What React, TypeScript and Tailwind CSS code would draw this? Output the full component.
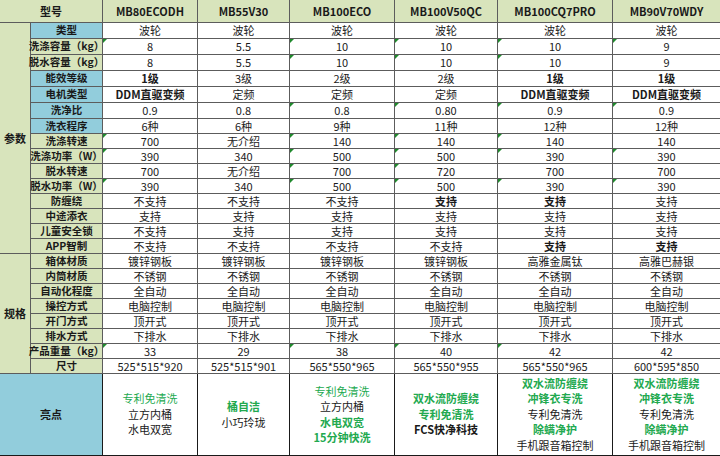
import React from 'react';

const models = ['MB80ECODH', 'MB55V30', 'MB100ECO', 'MB100V50QC', 'MB100CQ7PRO', 'MB90V70WDY'];

type Val = string | { t: string; b?: boolean };
type Row = { label: string; blue?: boolean; vals: Val[]; tri?: number[] };

const B = (t: string) => ({ t, b: true });

const params: Row[] = [
  { label: '类型', blue: true, vals: ['波轮', '波轮', '波轮', '波轮', '波轮', '波轮'] },
  { label: '洗涤容量（kg）', vals: ['8', '5.5', '10', '10', '10', '9'], tri: [0, 2, 3, 4, 5] },
  { label: '脱水容量（kg）', vals: ['8', '5.5', '10', '10', '10', '9'], tri: [2, 3, 4] },
  { label: '能效等级', blue: true, vals: [B('1级'), '3级', '2级', '2级', B('1级'), B('1级')] },
  { label: '电机类型', blue: true, vals: [B('DDM直驱变频'), '定频', '定频', '定频', B('DDM直驱变频'), B('DDM直驱变频')] },
  { label: '洗净比', blue: true, vals: ['0.9', '0.8', '0.8', '0.80', '0.9', '0.9'], tri: [2, 3, 4, 5] },
  { label: '洗衣程序', blue: true, vals: ['6种', '6种', '9种', '11种', '12种', '12种'] },
  { label: '洗涤转速', vals: ['700', '无介绍', '140', '140', '140', '140'], tri: [0, 2, 3, 4] },
  { label: '洗涤功率（W）', vals: ['390', '340', '500', '500', '390', '390'], tri: [0, 2, 3, 4, 5] },
  { label: '脱水转速', vals: ['700', '无介绍', '700', '720', '700', '700'], tri: [2, 3] },
  { label: '脱水功率（W）', vals: ['390', '340', '500', '500', '390', '390'], tri: [0, 2, 3, 4, 5] },
  { label: '防缠绕', vals: ['不支持', '不支持', '不支持', B('支持'), B('支持'), '支持'] },
  { label: '中途添衣', vals: ['支持', '支持', '支持', '支持', '支持', '支持'] },
  { label: '儿童安全锁', vals: ['不支持', '支持', '支持', '支持', '支持', '支持'] },
  { label: 'APP智制', vals: ['不支持', '不支持', '不支持', '不支持', B('支持'), B('支持')] },
];

const specs: Row[] = [
  { label: '箱体材质', vals: ['镀锌钢板', '镀锌钢板', '镀锌钢板', '镀锌钢板', '高雅金属钛', '高雅巴赫银'] },
  { label: '内筒材质', vals: ['不锈钢', '不锈钢', '不锈钢', '不锈钢', '不锈钢', '不锈钢'] },
  { label: '自动化程度', vals: ['全自动', '全自动', '全自动', '全自动', '全自动', '全自动'] },
  { label: '操控方式', vals: ['电脑控制', '电脑控制', '电脑控制', '电脑控制', '电脑控制', '电脑控制'] },
  { label: '开门方式', vals: ['顶开式', '顶开式', '顶开式', '顶开式', '顶开式', '顶开式'] },
  { label: '排水方式', vals: ['下排水', '下排水', '下排水', '下排水', '下排水', '下排水'] },
  { label: '产品重量（kg）', vals: ['33', '29', '38', '40', '42', '42'], tri: [0, 2, 3, 4] },
  { label: '尺寸', vals: ['525*515*920', '525*515*901', '565*550*965', '565*550*955', '565*550*965', '600*595*850'] },
];

type Line = { t: string; g?: boolean; b?: boolean };
const highlights: Line[][] = [
  [{ t: '专利免清洗', g: true }, { t: '立方内桶' }, { t: '水电双宽' }],
  [{ t: '桶自洁', g: true, b: true }, { t: '小巧玲珑' }],
  [{ t: '专利免清洗', g: true }, { t: '立方内桶' }, { t: '水电双宽', g: true, b: true }, { t: '15分钟快洗', g: true, b: true }],
  [{ t: '双水流防缠绕', g: true, b: true }, { t: '专利免清洗', g: true, b: true }, { t: 'FCS快净科技', b: true }],
  [
    { t: '双水流防缠绕', g: true, b: true },
    { t: '冲锋衣专洗', g: true, b: true },
    { t: '专利免清洗' },
    { t: '除螨净护', g: true, b: true },
    { t: '手机跟音箱控制' },
  ],
  [
    { t: '双水流防缠绕', g: true, b: true },
    { t: '冲锋衣专洗', g: true, b: true },
    { t: '专利免清洗' },
    { t: '除螨净护', g: true, b: true },
    { t: '手机跟音箱控制' },
  ],
];

const cell = 'relative flex items-center justify-center border-b border-[#5c5c5c] leading-none whitespace-nowrap';

function Tri() {
  return (
    <span className="absolute left-0 top-0 h-0 w-0 border-t-[4px] border-r-[4px] border-t-[#1f8a2c] border-r-transparent" />
  );
}

function DataRow({ row }: { row: Row }) {
  return (
    <>
      <div className={`${cell} border-r text-[10.5px] font-bold text-[#1a1a1a] ${row.blue ? 'bg-[#92cddc]' : 'bg-[#d8e4bc]'}`}>
        {row.label}
      </div>
      {row.vals.map((v, i) => {
        const t = typeof v === 'string' ? v : v.t;
        const b = typeof v === 'string' ? false : !!v.b;
        return (
          <div
            key={i}
            className={`${cell} bg-white text-[#1a1a1a] ${i < 5 ? 'border-r' : ''} ${b ? 'font-bold' : 'font-normal'}`}
          >
            {row.tri && row.tri.includes(i) ? <Tri /> : null}
            {t}
          </div>
        );
      })}
    </>
  );
}

export default function App() {
  return (
    <div className="w-[720px] h-[456px] overflow-hidden bg-white font-['Noto_Sans_CJK_SC','Noto_Sans',sans-serif] text-[11px]">
      <div className="grid h-[456px] w-[720px] grid-cols-[31px_72px_95px_92px_105px_103px_115px_107px] grid-rows-[23px_repeat(6,16px)_repeat(17,15px)_82px]">
        <div className={`${cell} col-span-2 border-r bg-[#d8e4bc] font-bold text-[#1a1a1a]`}>型号</div>
        {models.map((m, i) => (
          <div key={m} className={`${cell} bg-[#d8e4bc] font-bold text-[#1a1a1a] ${i < 5 ? 'border-r' : ''}`}>
            {m}
          </div>
        ))}

        <div className={`${cell} row-span-15 border-r bg-[#d8e4bc] font-bold text-[#1a1a1a]`}>参数</div>
        {params.map((r) => (
          <DataRow key={r.label} row={r} />
        ))}

        <div className={`${cell} row-span-8 border-r bg-[#d8e4bc] font-bold text-[#1a1a1a]`}>规格</div>
        {specs.map((r) => (
          <DataRow key={r.label} row={r} />
        ))}

        <div className="col-span-2 flex items-center justify-center border-r border-b border-[#1a1a1a] bg-[#92cddc] font-bold text-[#1a1a1a]">
          亮点
        </div>
        {highlights.map((lines, i) => (
          <div
            key={i}
            className={`flex flex-col items-center justify-center border-b border-[#1a1a1a] bg-white leading-[15.5px] ${i < 5 ? 'border-r' : ''}`}
          >
            {lines.map((l, j) => (
              <div
                key={j}
                className={`${l.g ? 'text-[#22a94f]' : 'text-[#1a1a1a]'} ${l.b ? 'font-bold' : 'font-normal'}`}
              >
                {l.t}
              </div>
            ))}
          </div>
        ))}
      </div>
    </div>
  );
}
